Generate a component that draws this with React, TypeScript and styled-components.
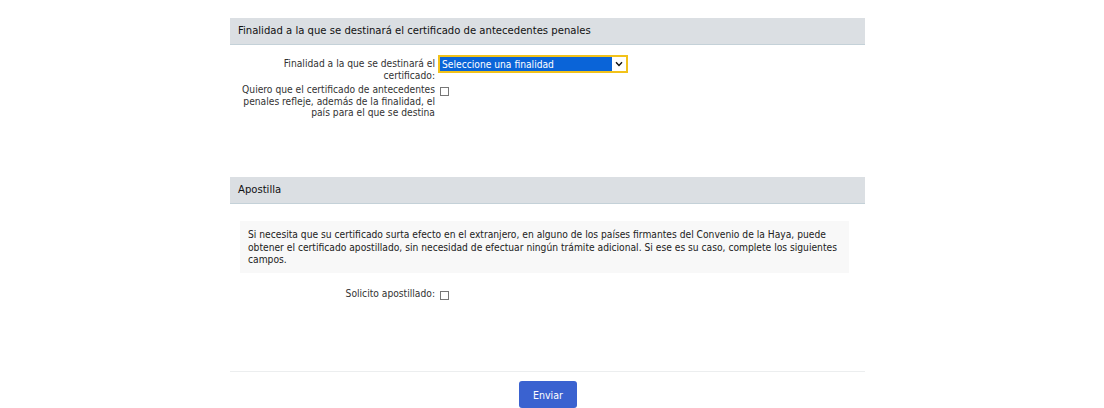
import { createGlobalStyle } from "styled-components"
import styled from "styled-components"

const GlobalStyle = createGlobalStyle`
  html, body {
    margin: 0;
    padding: 0;
    background: #fff;
  }
  body {
    font-family: "DejaVu Sans Condensed", "DejaVu Sans", Verdana, sans-serif;
    color: #222;
  }
`

const Page = styled.div`
  width: 635px;
  margin: 0 0 0 230px;
  padding-top: 18px;
`

const Section = styled.section<{ $minHeight: number }>`
  min-height: ${p => p.$minHeight}px;
`

const SectionHeader = styled.h3`
  margin: 0;
  height: 26px;
  line-height: 26px;
  padding: 0 8px;
  background: #dbdfe3;
  border-bottom: 1px solid #c4d1d8;
  font-size: 11.2px;
  font-weight: normal;
  color: #111;
`

const Fields = styled.div`
  display: flex;
  flex-direction: column;
  gap: 0;
  padding-top: 10px;
`

const Row = styled.div`
  display: grid;
  grid-template-columns: 205px 1fr;
  column-gap: 3px;
  align-items: start;
`

const Label = styled.label`
  text-align: right;
  font-size: 10.2px;
  line-height: 11.5px;
  color: #333;
  padding: 3px 0 0 8px;
`

const SelectWrap = styled.div`
  position: relative;
  width: 190px;
  height: 18px;
`

const Select = styled.select`
  display: block;
  box-sizing: border-box;
  width: 190px;
  height: 18px;
  font-family: "DejaVu Sans Condensed", "DejaVu Sans", sans-serif;
  font-size: 10.2px;
  color: #fff;
  border: 2px solid #f2c21a;
  padding: 0 2px;
  margin: 0;
  appearance: none;
  outline: none;
  background-color: #0a64d8;
  background-image: linear-gradient(#fff, #fff);
  background-size: 14px 14px;
  background-position: right 0 top 0;
  background-repeat: no-repeat;
`

const Chevron = styled.svg`
  position: absolute;
  right: 5px;
  top: 6px;
  pointer-events: none;
`

const Checkbox = styled.span`
  display: inline-block;
  width: 7px;
  height: 7px;
  margin: 4px 0 0 2px;
  border: 1px solid #777;
  background: #fff;
`

const Info = styled.div`
  margin: 17px 16px 0 10px;
  padding: 8px 8px 6px;
  background: #f8f8f8;
  font-size: 10.2px;
  line-height: 12.5px;
  color: #222;
`

const ApostillaFields = styled(Fields)`
  padding-top: 12px;
`

const Footer = styled.div`
  border-top: 1px solid #eceeef;
  display: flex;
  justify-content: center;
  padding-top: 9px;
`

const Button = styled.button`
  width: 58px;
  height: 27px;
  border: none;
  border-radius: 3px;
  background: #3a62d0;
  color: #fff;
  font-family: "DejaVu Sans Condensed", "DejaVu Sans", sans-serif;
  font-size: 10.5px;
  margin-left: 1px;
`

export default function App() {
  return (
    <>
      <GlobalStyle />
      <Page>
        <Section $minHeight={159}>
          <SectionHeader>Finalidad a la que se destinará el certificado de antecedentes penales</SectionHeader>
          <Fields>
            <Row>
              <Label>Finalidad a la que se destinará el certificado:</Label>
              <SelectWrap>
                <Select defaultValue="">
                  <option value="">Seleccione una finalidad</option>
                </Select>
                <Chevron width="8" height="6" viewBox="0 0 8 6">
                  <path d="M1 1.2 L4 4.4 L7 1.2" fill="none" stroke="#111" strokeWidth="1.4" />
                </Chevron>
              </SelectWrap>
            </Row>
            <Row>
              <Label>Quiero que el certificado de antecedentes penales refleje, además de la finalidad, el país para el que se destina</Label>
              <div><Checkbox /></div>
            </Row>
          </Fields>
        </Section>
        <Section $minHeight={194}>
          <SectionHeader>Apostilla</SectionHeader>
          <Info>
            Si necesita que su certificado surta efecto en el extranjero, en alguno de los países firmantes del Convenio de la Haya, puede obtener el certificado apostillado, sin necesidad de efectuar ningún trámite adicional. Si ese es su caso, complete los siguientes campos.
          </Info>
          <ApostillaFields>
            <Row>
              <Label>Solicito apostillado:</Label>
              <div><Checkbox /></div>
            </Row>
          </ApostillaFields>
        </Section>
        <Footer>
          <Button>Enviar</Button>
        </Footer>
      </Page>
    </>
  )
}
